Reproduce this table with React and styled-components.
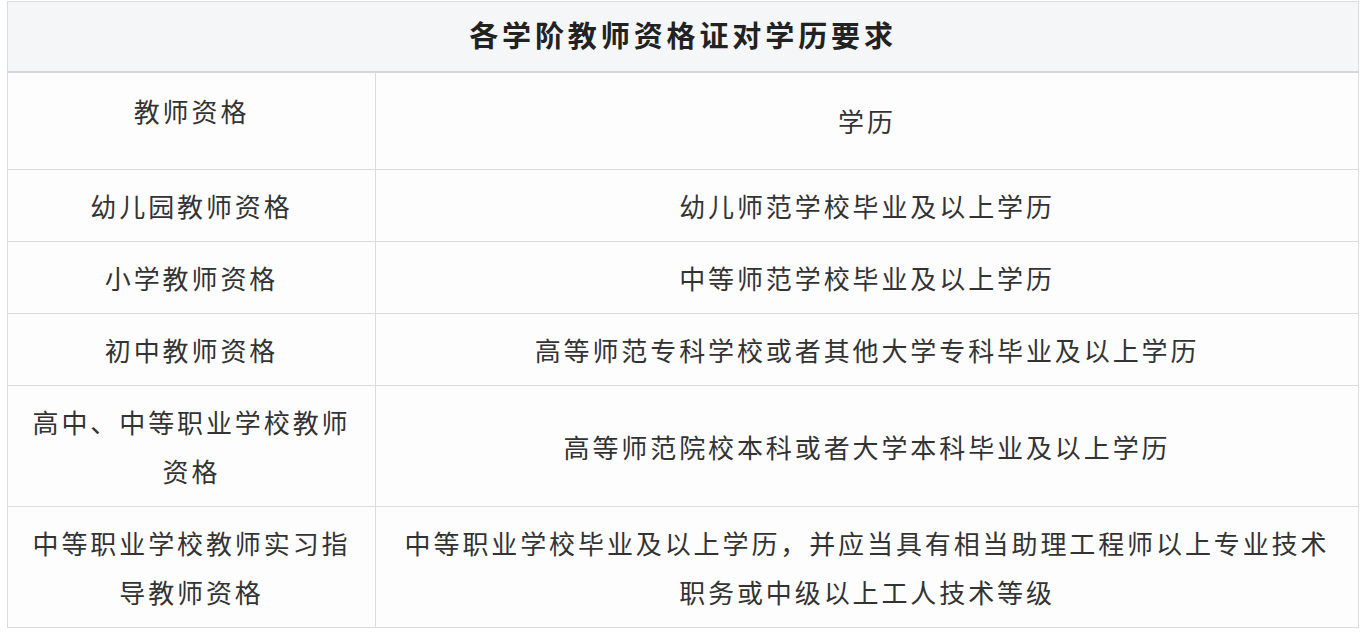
import React from "react";
import styled, { createGlobalStyle } from "styled-components";

const rows = [
  { level: "幼儿园教师资格", edu: "幼儿师范学校毕业及以上学历" },
  { level: "小学教师资格", edu: "中等师范学校毕业及以上学历" },
  { level: "初中教师资格", edu: "高等师范专科学校或者其他大学专科毕业及以上学历" },
  { level: "高中、中等职业学校教师资格", edu: "高等师范院校本科或者大学本科毕业及以上学历" },
  {
    level: "中等职业学校教师实习指导教师资格",
    edu: ["中等职业学校毕业及以上学历，并应当具有相当助理工程师以上专业技术", "职务或中级以上工人技术等级"],
  },
];

const App = () => {
  return (
    <>
      <GlobalStyle />
      <Wrapper>
        <Table>
          <colgroup>
            <col style={{ width: 368 }} />
            <col />
          </colgroup>
          <thead>
            <tr>
              <Title colSpan={2}>各学阶教师资格证对学历要求</Title>
            </tr>
          </thead>
          <tbody>
            <tr>
              <Cell $first>教师资格</Cell>
              <Cell $tall>学历</Cell>
            </tr>
            {rows.map((row) => (
              <tr key={row.level}>
                <Cell>{row.level}</Cell>
                <Cell>
                  {Array.isArray(row.edu)
                    ? row.edu.map((line, i) => (
                        <React.Fragment key={i}>
                          {i > 0 && <br />}
                          {line}
                        </React.Fragment>
                      ))
                    : row.edu}
                </Cell>
              </tr>
            ))}
          </tbody>
        </Table>
      </Wrapper>
    </>
  );
};

const GlobalStyle = createGlobalStyle`
  html, body {
    margin: 0;
    background: #ffffff;
  }
  body {
    font-family: "Noto Sans CJK SC", "Noto Sans", sans-serif;
    color: #333333;
  }
`;

const Wrapper = styled.div`
  padding: 1px 7px 0 7px;
`;

const Table = styled.table`
  width: 1352px;
  border-collapse: collapse;
  table-layout: fixed;
  background: #fdfdfe;
`;

const Title = styled.th`
  height: 64px;
  padding: 0 0 5px;
  background: #f5f6f8;
  border: 1px solid #dcdcdf;
  border-bottom: 2px solid #d6d7da;
  font-size: 29px;
  letter-spacing: 3.9px;
  font-weight: 700;
  color: #222222;
  text-align: center;
  vertical-align: middle;
`;

const Cell = styled.td`
  border: 1px solid #dcdcdf;
  padding: ${(p) =>
    p.$first ? "13px 18px 34px" : p.$tall ? "23px 18px 24px" : "11px 18px 11px"};
  font-size: 26px;
  letter-spacing: 2.9px;
  line-height: 49px;
  text-align: center;
  vertical-align: middle;
  color: #333333;
`;

export default App;
